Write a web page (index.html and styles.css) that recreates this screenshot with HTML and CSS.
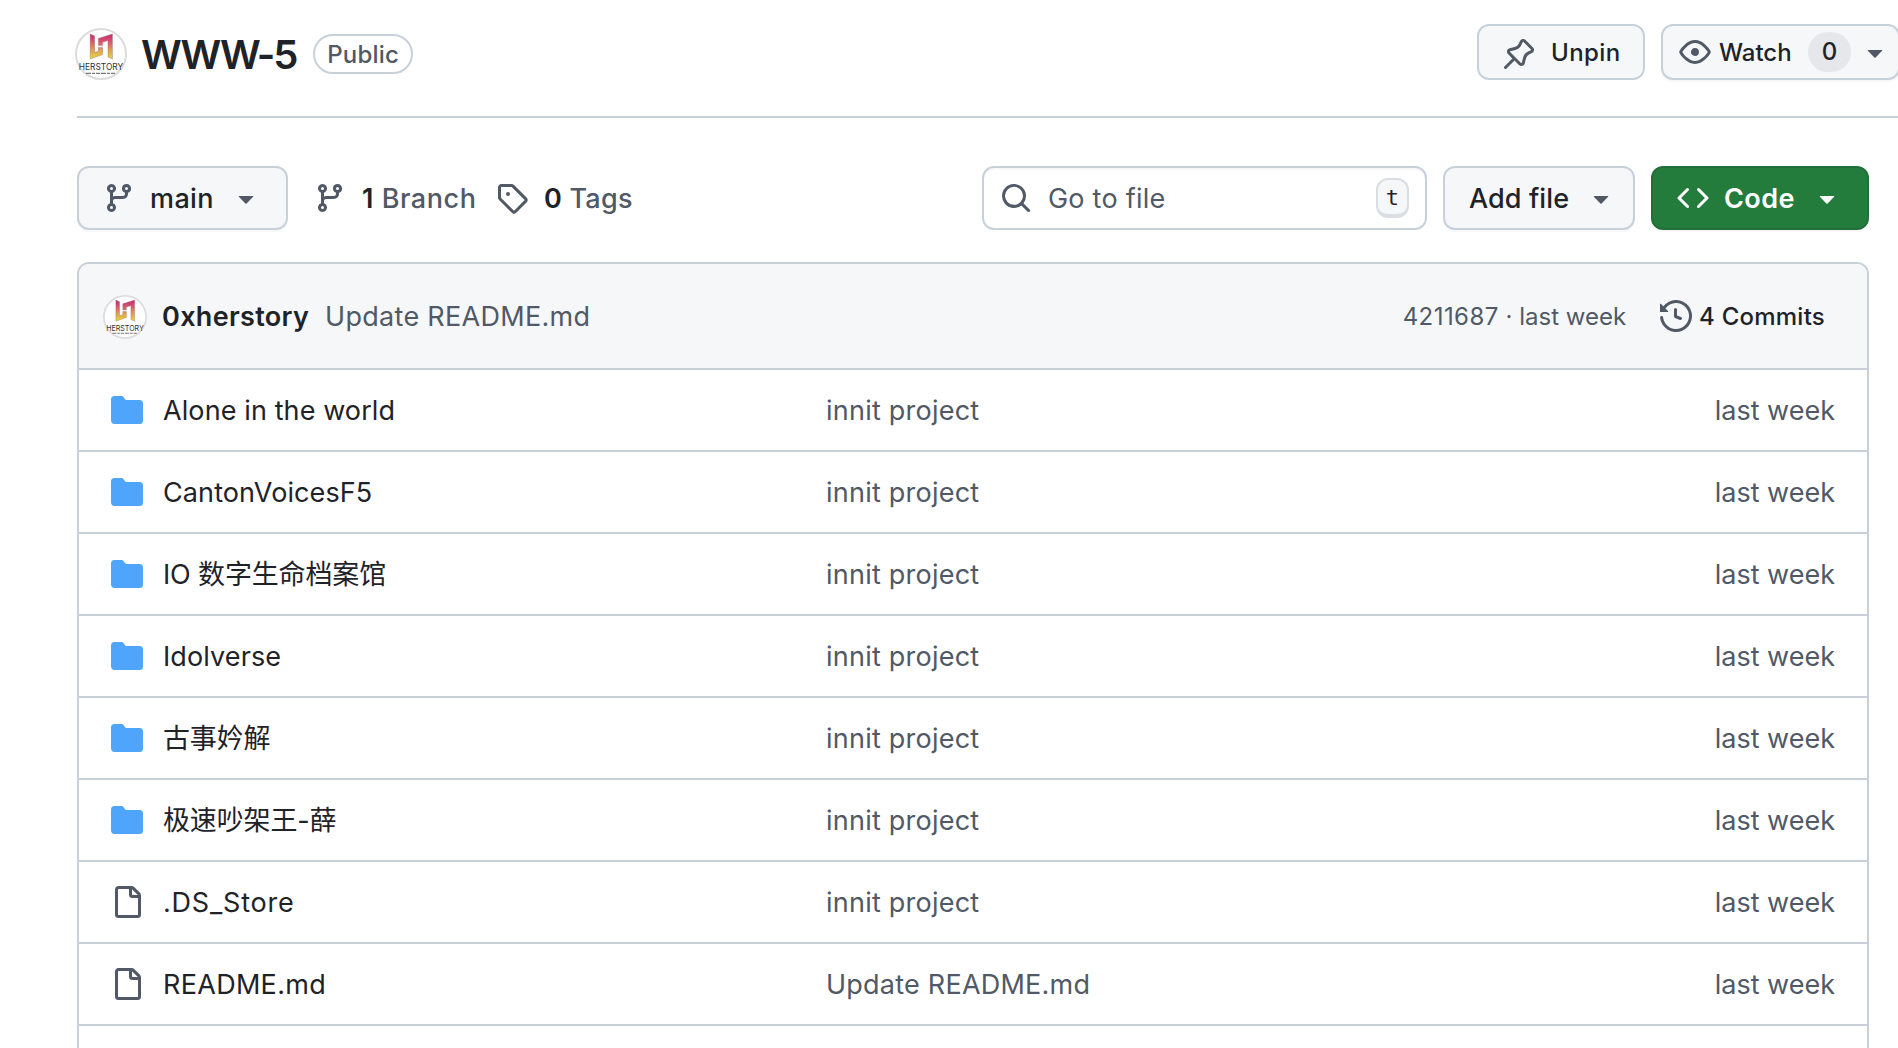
FILE: index.html
```
<!DOCTYPE html>
<html lang="en">
<head>
<meta charset="utf-8">
<title>WWW-5</title>
<link rel="stylesheet" href="styles.css">
</head>
<body>
<svg class="sprite" aria-hidden="true">
  <defs>
    <linearGradient id="logo-fill" gradientUnits="userSpaceOnUse" x1="0" y1="6" x2="0" y2="31">
      <stop offset="0" stop-color="#cb2671"/>
      <stop offset=".3" stop-color="#d8556f"/>
      <stop offset=".65" stop-color="#e3a052"/>
      <stop offset="1" stop-color="#e6dc3c"/>
    </linearGradient>
  </defs>
  <symbol id="logo" viewBox="0 0 52 52">
    <circle cx="26" cy="26" r="25" fill="#fff" stroke="#dcdcde" stroke-width="2"/>
    <path fill="url(#logo-fill)" stroke="#8a6a70" stroke-width=".4" d="M15.2 6 19.6 8V24.6L23.4 23.2V19.4H27.6V26.6L15.2 31Z"/>
    <path fill="url(#logo-fill)" stroke="#8a6a70" stroke-width=".4" d="M23.4 10.4 37.4 6V31L33 29V12.6L27.6 14.3V17.6H23.4Z"/>
    <text x="3.8" y="42.2" font-family="Inter, sans-serif" font-size="9.6" textLength="44.4" lengthAdjust="spacingAndGlyphs" letter-spacing="0" fill="#333">HERSTORY</text>
    <path d="M11 45.3H41" stroke="#777" stroke-width="1.2" stroke-dasharray="5 1 3 1 4 1"/>
  </symbol>
  <symbol id="pin" viewBox="0 0 16 16"><path d="m11.294.984 3.722 3.722a1.75 1.75 0 0 1-.504 2.826l-1.327.613a3.089 3.089 0 0 0-1.707 2.084l-.584 2.454c-.317 1.332-1.972 1.8-2.94.832L5.75 11.311 1.78 15.28a.749.749 0 1 1-1.06-1.06l3.969-3.97-2.204-2.204c-.968-.968-.5-2.623.832-2.94l2.454-.584a3.08 3.08 0 0 0 2.084-1.707l.613-1.327a1.75 1.75 0 0 1 2.826-.504ZM6.283 9.723l2.732 2.731a.25.25 0 0 0 .42-.119l.584-2.454a4.586 4.586 0 0 1 2.537-3.098l1.328-.613a.25.25 0 0 0 .072-.404l-3.722-3.722a.25.25 0 0 0-.404.072l-.613 1.328a4.584 4.584 0 0 1-3.098 2.537l-2.454.584a.25.25 0 0 0-.119.42l2.731 2.732Z"/></symbol>
  <symbol id="eye" viewBox="0 0 16 16"><path d="M8 2c1.981 0 3.671.992 4.933 2.078 1.27 1.091 2.187 2.345 2.637 3.023a1.62 1.62 0 0 1 0 1.798c-.45.678-1.367 1.932-2.637 3.023C11.67 13.008 9.981 14 8 14c-1.981 0-3.671-.992-4.933-2.078C1.797 10.83.88 9.576.43 8.898a1.62 1.62 0 0 1 0-1.798c.45-.677 1.367-1.931 2.637-3.022C4.33 2.992 6.019 2 8 2ZM1.679 7.932a.12.12 0 0 0 0 .136c.411.622 1.241 1.75 2.366 2.717C5.176 11.758 6.527 12.5 8 12.5c1.473 0 2.825-.742 3.955-1.715 1.124-.967 1.954-2.096 2.366-2.717a.12.12 0 0 0 0-.136c-.412-.621-1.242-1.75-2.366-2.717C10.824 4.242 9.473 3.5 8 3.5c-1.473 0-2.825.742-3.955 1.715-1.124.967-1.954 2.096-2.366 2.717ZM8 10a2 2 0 1 1-.001-3.999A2 2 0 0 1 8 10Z"/></symbol>
  <symbol id="branch" viewBox="0 0 16 16"><path d="M9.5 3.25a2.25 2.25 0 1 1 3 2.122V6A2.5 2.5 0 0 1 10 8.5H6a1 1 0 0 0-1 1v1.128a2.251 2.251 0 1 1-1.5 0V5.372a2.25 2.25 0 1 1 1.5 0v1.836A2.493 2.493 0 0 1 6 7h4a1 1 0 0 0 1-1v-.628A2.25 2.25 0 0 1 9.5 3.25Zm-6 0a.75.75 0 1 0 1.5 0 .75.75 0 0 0-1.5 0Zm8.25-.75a.75.75 0 1 0 0 1.5.75.75 0 0 0 0-1.5ZM4.25 12a.75.75 0 1 0 0 1.5.75.75 0 0 0 0-1.5Z"/></symbol>
  <symbol id="tag" viewBox="0 0 16 16"><path d="M1 7.775V2.75C1 1.784 1.784 1 2.75 1h5.025c.464 0 .91.184 1.238.513l6.25 6.25a1.75 1.75 0 0 1 0 2.474l-5.026 5.026a1.75 1.75 0 0 1-2.474 0l-6.25-6.25A1.752 1.752 0 0 1 1 7.775Zm1.5 0c0 .066.026.13.073.177l6.25 6.25a.25.25 0 0 0 .354 0l5.025-5.025a.25.25 0 0 0 0-.354l-6.25-6.25a.25.25 0 0 0-.177-.073H2.75a.25.25 0 0 0-.25.25ZM6 5a1 1 0 1 1 0 2 1 1 0 0 1 0-2Z"/></symbol>
  <symbol id="caret" viewBox="0 0 16 16"><path d="m4.427 7.427 3.396 3.396a.25.25 0 0 0 .354 0l3.396-3.396A.25.25 0 0 0 11.396 7H4.604a.25.25 0 0 0-.177.427Z"/></symbol>
  <symbol id="search" viewBox="0 0 16 16"><path d="M10.68 11.74a6 6 0 0 1-7.922-8.982 6 6 0 0 1 8.982 7.922l3.04 3.04a.749.749 0 0 1-.326 1.275.749.749 0 0 1-.734-.215ZM11.5 7a4.499 4.499 0 1 0-8.997 0A4.499 4.499 0 0 0 11.5 7Z"/></symbol>
  <symbol id="code" viewBox="0 0 16 16"><path d="m11.28 3.22 4.25 4.25a.75.75 0 0 1 0 1.06l-4.25 4.25a.749.749 0 0 1-1.275-.326.749.749 0 0 1 .215-.734L13.94 8l-3.72-3.72a.749.749 0 0 1 .326-1.275.749.749 0 0 1 .734.215Zm-6.56 0a.751.751 0 0 1 1.042.018.751.751 0 0 1 .018 1.042L2.06 8l3.72 3.72a.749.749 0 0 1-.326 1.275.749.749 0 0 1-.734-.215L.47 8.53a.75.75 0 0 1 0-1.06Z"/></symbol>
  <symbol id="history" viewBox="0 0 16 16"><path d="m.427 1.927 1.215 1.215a8.002 8.002 0 1 1-1.6 5.685.75.75 0 1 1 1.493-.154 6.5 6.5 0 1 0 1.18-4.458l1.358 1.358A.25.25 0 0 1 3.896 6H.25A.25.25 0 0 1 0 5.75V2.104a.25.25 0 0 1 .427-.177ZM7.75 4a.75.75 0 0 1 .75.75v2.992l2.028.812a.75.75 0 0 1-.557 1.392l-2.5-1A.751.751 0 0 1 7 8.25v-3.5A.75.75 0 0 1 7.75 4Z"/></symbol>
  <symbol id="folder" viewBox="0 0 16 16"><path d="M1.75 1A1.75 1.75 0 0 0 0 2.75v10.5C0 14.216.784 15 1.75 15h12.5A1.75 1.75 0 0 0 16 13.25v-8.5A1.75 1.75 0 0 0 14.25 3H7.5a.25.25 0 0 1-.2-.1l-.9-1.2C6.07 1.26 5.55 1 5 1H1.75Z"/></symbol>
  <symbol id="file" viewBox="0 0 16 16"><path d="M2 1.75C2 .784 2.784 0 3.75 0h6.586c.464 0 .909.184 1.237.513l2.914 2.914c.329.328.513.773.513 1.237v9.586A1.75 1.75 0 0 1 13.25 16h-9.5A1.75 1.75 0 0 1 2 14.25Zm1.75-.25a.25.25 0 0 0-.25.25v12.5c0 .138.112.25.25.25h9.5a.25.25 0 0 0 .25-.25V6h-2.75A1.75 1.75 0 0 1 9 4.25V1.5Zm6.75.062V4.25c0 .138.112.25.25.25h2.688l-.011-.013-2.914-2.914-.013-.011Z"/></symbol>
</svg>

<header class="repo-header">
  <svg class="avatar"><use href="#logo"/></svg>
  <h1 class="repo-name">WWW-5</h1>
  <span class="visibility">Public</span>
  <div class="repo-actions">
    <button class="btn btn-small btn-unpin"><svg class="icon"><use href="#pin"/></svg><span>Unpin</span></button>
    <button class="btn btn-small btn-watch"><svg class="icon"><use href="#eye"/></svg><span>Watch</span><b class="counter">0</b><svg class="icon"><use href="#caret"/></svg></button>
  </div>
</header>

<main class="content">
  <div class="toolbar">
    <button class="btn btn-branch"><svg class="icon"><use href="#branch"/></svg><span>main</span><svg class="icon caret"><use href="#caret"/></svg></button>
    <a class="stat stat-branches"><svg class="icon"><use href="#branch"/></svg><span><b>1</b> Branch</span></a>
    <a class="stat"><svg class="icon"><use href="#tag"/></svg><span><b>0</b> Tags</span></a>
    <div class="search"><svg class="icon"><use href="#search"/></svg><span>Go to file</span><kbd>t</kbd></div>
    <button class="btn btn-add"><span>Add file</span><svg class="icon caret"><use href="#caret"/></svg></button>
    <button class="btn btn-code"><svg class="icon"><use href="#code"/></svg><span>Code</span><svg class="icon caret"><use href="#caret"/></svg></button>
  </div>

  <section class="files">
    <div class="commit">
      <svg class="avatar"><use href="#logo"/></svg>
      <span class="author">0xherstory</span>
      <span class="message">Update README.md</span>
      <span class="meta"><b class="sha">4211687</b> · last week</span>
      <svg class="icon"><use href="#history"/></svg>
      <span class="commits">4 Commits</span>
    </div>
    <div class="row"><svg class="icon folder"><use href="#folder"/></svg><span class="name">Alone in the world</span><span>innit project</span><span class="age">last week</span></div>
    <div class="row"><svg class="icon folder"><use href="#folder"/></svg><span class="name">CantonVoicesF5</span><span>innit project</span><span class="age">last week</span></div>
    <div class="row"><svg class="icon folder"><use href="#folder"/></svg><span class="name" lang="zh">IO 数字生命档案馆</span><span>innit project</span><span class="age">last week</span></div>
    <div class="row"><svg class="icon folder"><use href="#folder"/></svg><span class="name">Idolverse</span><span>innit project</span><span class="age">last week</span></div>
    <div class="row"><svg class="icon folder"><use href="#folder"/></svg><span class="name" lang="zh">古事妗解</span><span>innit project</span><span class="age">last week</span></div>
    <div class="row"><svg class="icon folder"><use href="#folder"/></svg><span class="name" lang="zh">极速吵架王-薛</span><span>innit project</span><span class="age">last week</span></div>
    <div class="row"><svg class="icon"><use href="#file"/></svg><span class="name filename-dotted">.DS_Store</span><span>innit project</span><span class="age">last week</span></div>
    <div class="row"><svg class="icon"><use href="#file"/></svg><span class="name filename">README.md</span><span>Update README.md</span><span class="age">last week</span></div>
    <div class="row row-last"></div>
  </section>
</main>
</body>
</html>
```
FILE: styles.css
```
:root {
  --border: #c8d1da;
  --subtle: #f5f7f9;
  --text: #1f2328;
  --muted: #505965;
}

* { box-sizing: border-box; }

body {
  margin: 0;
  height: 1048px;
  overflow: hidden;
  background: #fff;
  color: var(--text);
  font: 400 27px/40px Inter, "Noto Sans CJK SC", sans-serif;
  letter-spacing: 0.23px;
  white-space: nowrap;
}

.sprite { position: absolute; width: 0; height: 0; }

.icon {
  width: 32px;
  height: 32px;
  flex: none;
  fill: var(--muted);
}

.avatar { flex: none; width: 52px; height: 52px; }

/* Nudge labels so capitals sit level with the icons beside them */
.btn > span,
.stat > span,
.search > span,
.commit > span,
.row > span { padding-top: 2px; }

/* Repository title bar */
.repo-header {
  display: flex;
  align-items: center;
  height: 118px;
  margin-left: 77px;
  padding-bottom: 8px;
  border-bottom: 2px solid var(--border);
}

.repo-header .avatar { margin-left: -2px; }

.repo-name {
  margin: 0 0 0 14px;
  padding-top: 2px;
  font-size: 40px;
  font-weight: 600;
  letter-spacing: -2.2px;
}

.visibility {
  width: 100px;
  height: 40px;
  margin-left: 17px;
  border: 2px solid var(--border);
  border-radius: 20px;
  color: var(--muted);
  font-size: 24px;
  font-weight: 500;
  line-height: 37px;
  text-align: center;
}

.repo-actions {
  display: flex;
  gap: 16px;
  margin: -4px -2px 0 auto;
}

/* Buttons */
.btn {
  display: flex;
  align-items: center;
  flex: none;
  height: 64px;
  padding: 0 24px;
  border: 2px solid var(--border);
  border-radius: 12px;
  background: var(--subtle);
  box-shadow: 0 2px 0 rgba(31, 35, 40, 0.03);
  color: var(--text);
  font: inherit;
  font-weight: 500;
  letter-spacing: 0.4px;
}

.btn .caret { margin-left: auto; }

.btn-small { height: 56px; font-size: 24px; }
.btn-unpin { width: 168px; gap: 16px; box-shadow: none; }
.btn-unpin .icon { margin-top: 4px; }
.btn-watch { width: 239px; padding: 0 0 0 16px; letter-spacing: 0; }
.btn-watch > span { width: 97px; padding-left: 8px; text-align: left; }

.counter {
  width: 43px;
  height: 40px;
  margin-right: 8px;
  border-radius: 20px;
  background: #e5e7eb;
  font-weight: 500;
  text-align: center;
}

/* Toolbar */
.content { width: 1792px; margin-left: 77px; }

.toolbar {
  display: flex;
  align-items: center;
  margin-top: 48px;
}

.btn-branch { width: 211px; gap: 15px; }

.stat {
  display: flex;
  align-items: center;
  gap: 16px;
  color: var(--muted);
  font-weight: 500;
}

.stat b { color: var(--text); font-weight: 600; }
.stat-branches { width: 182px; margin-left: 26px; letter-spacing: 0.55px; }

.search {
  display: flex;
  align-items: center;
  width: 445px;
  height: 64px;
  margin-left: auto;
  padding: 0 16px;
  border: 2px solid var(--border);
  border-radius: 12px;
  box-shadow: inset 0 2px 0 rgba(31, 35, 40, 0.03);
  color: var(--muted);
}

.search span { margin-left: 16px; }

.search kbd {
  width: 33px;
  height: 40px;
  margin-left: auto;
  border: 2px solid #d9dee4;
  border-bottom-width: 4px;
  border-radius: 12px;
  background: var(--subtle);
  color: var(--text);
  font: 22px/35px "DejaVu Sans Mono", monospace;
  text-align: center;
}

.btn-add { width: 192px; margin-left: 16px; padding-right: 16px; letter-spacing: 0.1px; }

.btn-code {
  width: 218px;
  margin-left: 16px;
  gap: 15px;
  border-color: #227038;
  background: #247c3c;
  color: #fff;
  font-weight: 600;
}

.btn-code .icon { fill: #fff; }

/* File table */
.files {
  height: 786px;
  margin-top: 32px;
  border: 2px solid var(--border);
  border-bottom: 0;
  border-radius: 12px 12px 0 0;
  overflow: hidden;
}

.commit {
  display: flex;
  align-items: center;
  height: 104px;
  padding: 0 42px 0 24px;
  background: var(--subtle);
}

.commit .avatar { width: 44px; height: 44px; margin-top: 2px; }
.author { width: 163px; margin-left: 15px; font-weight: 600; letter-spacing: 0.33px; }
.message { color: var(--muted); letter-spacing: 0.3px; }
.meta { margin-left: auto; color: var(--muted); font-size: 24px; letter-spacing: 0; }
.sha { font-weight: 400; letter-spacing: 0.45px; }
.commit .icon { margin-left: 34px; }
.commits { margin-left: 7px; font-size: 24px; font-weight: 500; }

.row {
  display: grid;
  grid-template-columns: 32px 643px 1fr auto;
  column-gap: 20px;
  align-items: center;
  height: 82px;
  padding: 0 32px;
  border-top: 2px solid var(--border);
  color: var(--muted);
}

.row-last { height: 24px; }
.row .name { color: var(--text); letter-spacing: 0.1px; }
.row .name:lang(zh) { letter-spacing: -0.15px; }
.row .filename { letter-spacing: 0.3px; }
.row .filename-dotted { letter-spacing: 0.8px; }
.row .folder { fill: #4fa4fb; }
.row .age { letter-spacing: 0; }
```
